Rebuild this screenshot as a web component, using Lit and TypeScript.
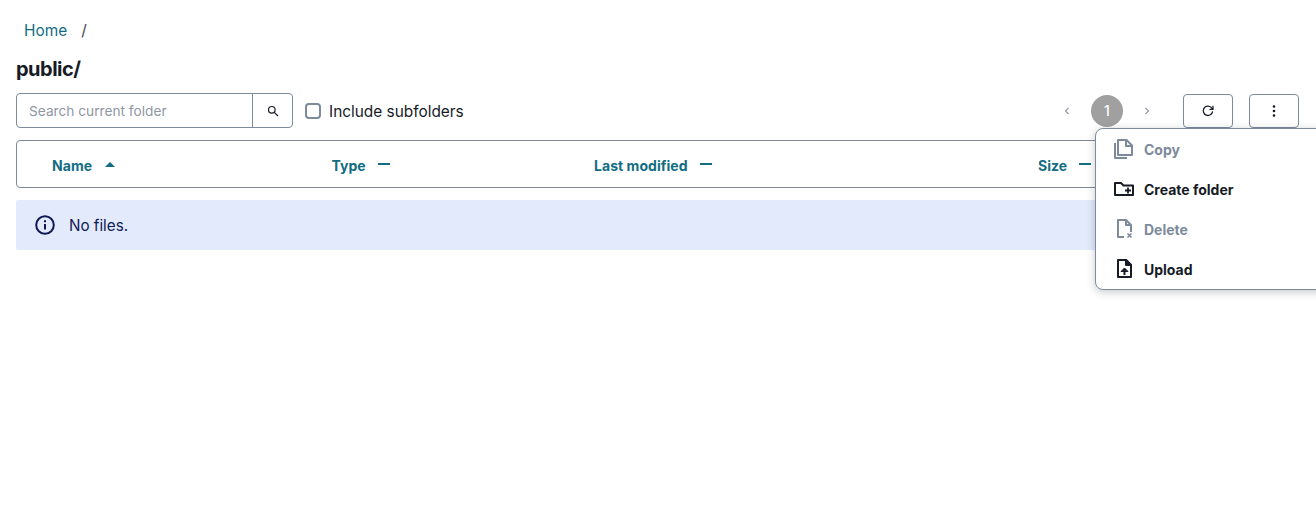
import {html, css, LitElement} from 'lit';
import {customElement} from 'lit/decorators.js';

@customElement('app-root')
export class AppRoot extends LitElement {
  static styles = css`
    :host {
      display: block;
      position: relative;
      height: 511px;
      overflow: hidden;
      padding: 0 16px;
      box-sizing: border-box;
      background: #fff;
      font-family: Inter, "Liberation Sans", sans-serif;
      color: #161b26;
    }
    .crumbs {
      display: flex;
      align-items: center;
      height: 20px;
      padding: 21px 0 0 8px;
      font-size: 15.4px;
      line-height: 20px;
    }
    .crumbs a { color: #126d83; }
    .crumbs span { margin-left: 14px; color: #3b4350; }
    h1 {
      margin: 0;
      padding-top: 16px;
      font-size: 20px;
      line-height: 24px;
      font-weight: 700;
      letter-spacing: -0.5px;
    }
    .toolbar {
      display: flex;
      align-items: center;
      height: 35px;
      margin-top: 12px;
    }
    .search {
      display: flex;
      width: 277px;
      height: 35px;
      box-sizing: border-box;
      border: 1px solid #7d8a9b;
      border-radius: 4px;
    }
    .search .field {
      flex: 1;
      padding-left: 12px;
      font-size: 13.7px;
      line-height: 35px;
      color: #8f97a3;
      border-right: 1px solid #7d8a9b;
    }
    .search .go {
      width: 39px;
      display: flex;
      align-items: center;
      justify-content: center;
    }
    .check {
      width: 16px;
      height: 16px;
      box-sizing: border-box;
      margin-left: 12px;
      border: 2px solid #7d8a9b;
      border-radius: 4px;
    }
    .label { margin-left: 8px; padding-top: 2px; font-size: 15.4px; }
    .pager {
      display: flex;
      align-items: center;
      margin-left: auto;
      color: #8f97a3;
    }
    .pager .arrow {
      width: 32px;
      display: flex;
      justify-content: center;
    }
    .pager .page {
      width: 32px;
      height: 32px;
      margin: 0 8px;
      border-radius: 50%;
      background: #a0a0a0;
      color: #fff;
      font-size: 14px;
      font-weight: 500;
      line-height: 32px;
      text-align: center;
    }
    .btn {
      width: 50px;
      height: 34px;
      box-sizing: border-box;
      border: 1px solid #7d8a9b;
      border-radius: 4px;
      display: flex;
      align-items: center;
      justify-content: center;
    }
    .btn.refresh { margin-left: 20px; }
    .btn.more { margin-left: 16px; margin-right: 1px; }
    .table {
      display: grid;
      grid-template-columns: 279.5px 262.5px 444px 1fr;
      align-items: center;
      height: 48px;
      box-sizing: border-box;
      margin-top: 12px;
      padding: 2px 0 0 35px;
      border: 1px solid #7d8a9b;
      border-radius: 4px;
      color: #126d83;
      font-size: 14px;
      font-weight: 700;
      letter-spacing: 0.05px;
    }
    .col { display: flex; align-items: center; }
    .dash {
      width: 12px;
      height: 2px;
      margin-left: 12px;
      margin-bottom: 2px;
      background: #126d83;
    }
    .caret {
      width: 0;
      height: 0;
      margin-left: 13px;
      margin-bottom: 2px;
      border-left: 5px solid transparent;
      border-right: 5px solid transparent;
      border-bottom: 5px solid #126d83;
    }
    .alert {
      display: flex;
      align-items: center;
      height: 50px;
      margin-top: 12px;
      padding-left: 19px;
      border-radius: 2px;
      background: #e3eafc;
      color: #0e1a54;
      font-size: 15.2px;
    }
    .alert svg { margin-right: 14px; }
    .menu {
      position: absolute;
      left: 1095px;
      top: 128px;
      width: 240px;
      height: 162px;
      box-sizing: border-box;
      background: #fff;
      border: 1px solid #7d8a9b;
      border-radius: 8px;
      box-shadow: 0 2px 8px rgba(30, 40, 60, 0.25);
    }
    .item {
      display: flex;
      align-items: center;
      height: 40px;
      padding-left: 16px;
      font-size: 14px;
      font-weight: 700;
    }
    .item svg { margin-right: 10px; flex: none; }
    .item.off { color: #7d8a9b; }
  `;

  render() {
    return html`
      <div class="crumbs"><a>Home</a><span>/</span></div>
      <h1>public/</h1>
      <div class="toolbar">
        <div class="search">
          <div class="field">Search current folder</div>
          <div class="go">
            <svg width="12" height="12" viewBox="0 0 12 12" fill="none" stroke="#161b26" stroke-width="1.2"><circle cx="4.8" cy="4.8" r="3.3"/><path d="M7.3 7.3 11 11"/></svg>
          </div>
        </div>
        <div class="check"></div>
        <div class="label">Include subfolders</div>
        <div class="pager">
          <div class="arrow"><svg width="6" height="8" viewBox="0 0 6 8" fill="none" stroke="currentColor" stroke-width="1.1"><path d="M4.5 1 1.5 4l3 3"/></svg></div>
          <div class="page">1</div>
          <div class="arrow"><svg width="6" height="8" viewBox="0 0 6 8" fill="none" stroke="currentColor" stroke-width="1.1"><path d="M1.5 1l3 3-3 3"/></svg></div>
        </div>
        <div class="btn refresh">
          <svg width="12" height="12" viewBox="0 0 12 12" fill="none" stroke="#161b26" stroke-width="1.3"><path d="M10.6 6.4A4.7 4.7 0 1 1 9.2 2.4L10.8 4"/><path d="M11 .8V4.300H7.500" stroke-width="1.2"/></svg>
        </div>
        <div class="btn more">
          <svg width="4" height="12" viewBox="0 0 4 12" fill="#161b26"><circle cx="2" cy="1.5" r="1.3"/><circle cx="2" cy="6" r="1.3"/><circle cx="2" cy="10.5" r="1.3"/></svg>
        </div>
      </div>
      <div class="table">
        <div class="col">Name<span class="caret"></span></div>
        <div class="col">Type<span class="dash"></span></div>
        <div class="col">Last modified<span class="dash"></span></div>
        <div class="col">Size<span class="dash"></span></div>
      </div>
      <div class="alert">
        <svg width="20" height="20" viewBox="0 0 20 20" fill="none" stroke="#0e1a54" stroke-width="2"><circle cx="10" cy="10" r="8.8"/><path d="M10 9v5.5"/><path d="M10 5.2v2"/></svg>
        No files.
      </div>
      <div class="menu">
        <div class="item off">
          <svg width="22" height="24" viewBox="0 0 22 24" fill="none" stroke="currentColor" stroke-width="2" stroke-linejoin="round"><path d="M6 3h8.500L20 8.500V18H6z"/><path d="M14 3v6h6"/><path d="M3 6v15h12"/></svg>
          Copy
        </div>
        <div class="item">
          <svg width="22" height="24" viewBox="0 0 22 24" fill="none" stroke="#161b26" stroke-width="2" stroke-linejoin="round"><path d="M3 18V6h6l2.500 2.500H21V18z"/><path d="M16 10.500v6M13 13.500h6" stroke-width="1.800"/></svg>
          Create folder
        </div>
        <div class="item off">
          <svg width="22" height="24" viewBox="0 0 22 24" fill="none" stroke="currentColor" stroke-width="2" stroke-linejoin="round"><path d="M12 20H6V3h8l5 5v7"/><path d="M14 3v5h5"/><path d="M15.500 16.500l4 4M19.500 16.500l-4 4" stroke-width="1.600"/></svg>
          Delete
        </div>
        <div class="item">
          <svg width="22" height="24" viewBox="0 0 22 24" fill="none" stroke="#161b26" stroke-width="2" stroke-linejoin="round"><path d="M6 3h8l5 5v12H6z"/><path d="M14 3v5h5z" fill="#161b26"/><path d="M12.500 18v-6"/><path d="M9 14.500l3.500-3.500 3.500 3.500z" fill="#161b26" stroke-width="1"/></svg>
          Upload
        </div>
      </div>
    `;
  }
}
